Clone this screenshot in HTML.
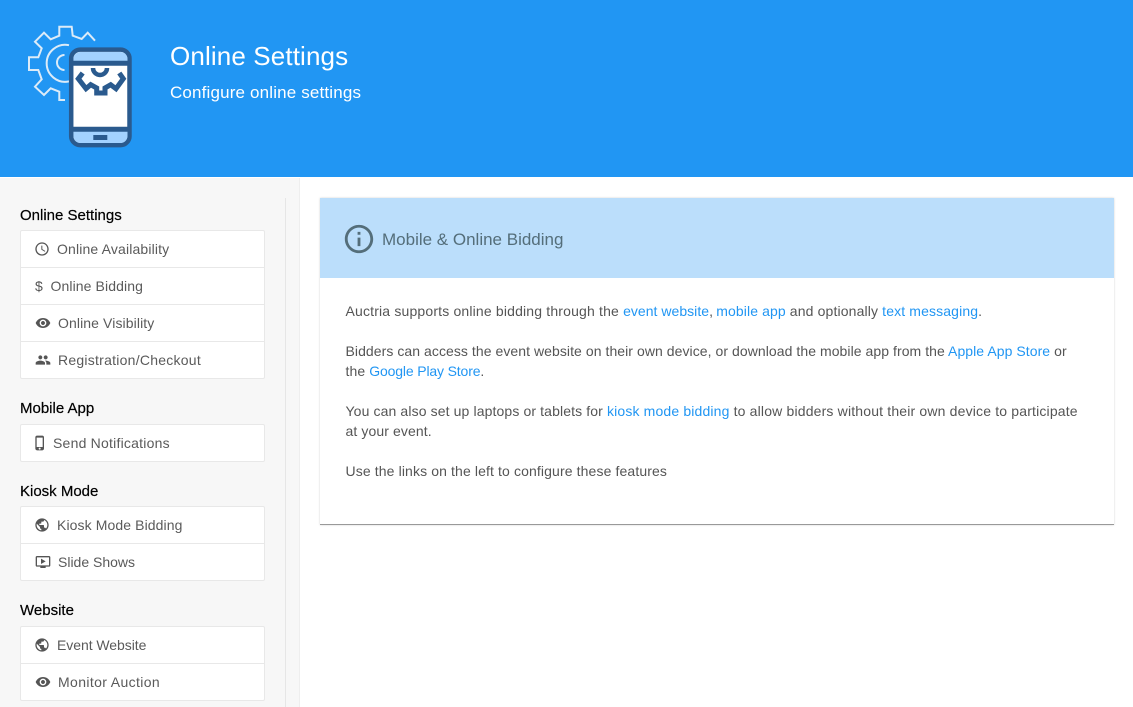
<!DOCTYPE html>
<html lang="en"><head><meta charset="utf-8"><title>Online Settings</title>
<style>
*{box-sizing:border-box}
html,body{margin:0;padding:0;width:1133px;height:707px;overflow:hidden;background:#fff;font-family:"Liberation Sans",sans-serif}
a{color:#2196f3;text-decoration:none}
.hdr{position:absolute;left:0;top:0;width:1133px;height:177px;background:#2196f3;color:#fff}
.t1{position:absolute;left:170px;top:40px;font-size:26px;line-height:32px;letter-spacing:.13px;white-space:nowrap}
.t2{position:absolute;left:170px;top:81px;font-size:17px;line-height:22px;letter-spacing:.16px;white-space:nowrap}
.side{position:absolute;left:0;top:178px;width:300px;height:529px;background:#f7f7f7;border-right:1px solid #eee}
.vl{position:absolute;left:285px;top:198px;width:1px;height:509px;background:#e6e6e6}
.sh{position:absolute;left:20px;font-size:15px;line-height:20px;color:#000;-webkit-text-stroke:.2px #000;white-space:nowrap}
.card{position:absolute;left:20px;width:245px;background:#fff;border:1px solid #e8e8e8;border-radius:2px}
.row{position:relative;height:37px;border-bottom:1px solid #e8e8e8;font-size:14px;line-height:36px;color:#5a5a5a;white-space:nowrap;letter-spacing:.1px}
.row:last-child{border-bottom:0;height:36px}
.row svg{position:absolute;fill:#555}
.row span{position:absolute;top:0}
.panel{position:absolute;left:320px;top:198px;width:794px;height:327px;background:#fff;border-bottom:1px solid #999;box-shadow:0 0 2px rgba(0,0,0,.18)}
.ph{position:absolute;left:0;top:0;width:794px;height:80px;background:#bbdefb}
.ph svg{position:absolute;left:22px;top:24px;fill:#546e7a}
.ph div{position:absolute;left:62px;top:30px;font-size:17px;line-height:24px;color:#546e7a;white-space:nowrap}
.l{position:absolute;left:345.5px;font-size:14px;line-height:20px;color:#555;white-space:nowrap;letter-spacing:.1px}
</style></head><body>
<div class="hdr">
<svg width="140" height="160" viewBox="0 0 140 160" style="position:absolute;left:0;top:0">
<g fill="none" stroke="#dcebf8" stroke-width="2">
<path d="M95 40.7 87.7 32.7 81.7 39 72.7 35.7 71.7 26.7H59.3V35.7L50.7 39.3 44 32.7 35 41.7 41.7 48.3 38.3 57.3H29V70H38.3L41.7 79.3 35 86.7 44 95 50.7 88.3 59.3 91.7V100H65"/>
<path d="M69 45.2A18.5 18.5 0 1 0 69 81.4"/>
<path d="M64.5 55A7.5 7.5 0 0 0 64.5 70"/>
</g>
<rect x="71.2" y="49.6" width="58.3" height="95.5" rx="9" fill="#fff" stroke="#2a5a8e" stroke-width="4.5"/>
<path d="M73.5 61V59a7 7 0 0 1 7-7h40a7 7 0 0 1 7 7v2zM73.5 131v5a7 7 0 0 0 7 7h40a7 7 0 0 0 7-7v-5z" fill="#a3d2ff"/>
<path d="M71 63.2H130M71 129.2H130" stroke="#2a5a8e" stroke-width="5" fill="none"/>
<rect x="93.3" y="135" width="14" height="5" fill="#2a5a8e"/>
<g fill="none" stroke="#2a5a8e" stroke-width="5">
<path d="M93 68a7 7 0 0 0 14 0" stroke-width="4.5"/>
<path d="M82.7 73 78.3 78.7 86 88.7 90.7 84.7 96.7 88V93H105V88L110.7 84.7 116 88.7 123.3 78.7 119.3 73"/>
</g>
</svg>
<div class="t1">Online Settings</div>
<div class="t2" style="top:82px">Configure online settings</div>
</div>

<div class="side"></div><div class="vl"></div>

<div class="sh" style="top:206px">Online Settings</div>
<div class="card" style="top:230px;height:149px">
<div class="row"><svg style="left:13px;top:10px" width="16" height="16" viewBox="0 0 24 24"><path d="M11.99 2C6.47 2 2 6.48 2 12s4.47 10 9.99 10C17.52 22 22 17.52 22 12S17.52 2 11.99 2zM12 20c-4.42 0-8-3.58-8-8s3.58-8 8-8 8 3.58 8 8-3.58 8-8 8zm.5-13H11v6l5.25 3.15.75-1.23-4.5-2.67z"/></svg><span style="left:36px;letter-spacing:.15px">Online Availability</span></div>
<div class="row"><span style="left:14px;color:#555">$</span><span style="left:29.5px">Online Bidding</span></div>
<div class="row"><svg style="left:14px;top:10px" width="16" height="16" viewBox="0 0 24 24"><path d="M12 4.5C7 4.5 2.73 7.61 1 12c1.73 4.39 6 7.5 11 7.5s9.27-3.11 11-7.5c-1.73-4.39-6-7.5-11-7.5zM12 17c-2.76 0-5-2.24-5-5s2.24-5 5-5 5 2.24 5 5-2.24 5-5 5zm0-8c-1.66 0-3 1.34-3 3s1.34 3 3 3 3-1.34 3-3-1.34-3-3-3z"/></svg><span style="left:37px">Online Visibility</span></div>
<div class="row"><svg style="left:14px;top:10px" width="16" height="16" viewBox="0 0 24 24"><path d="M16 11c1.66 0 2.99-1.34 2.99-3S17.66 5 16 5c-1.66 0-3 1.34-3 3s1.34 3 3 3zm-8 0c1.66 0 2.99-1.34 2.99-3S9.66 5 8 5C6.34 5 5 6.34 5 8s1.34 3 3 3zm0 2c-2.33 0-7 1.17-7 3.5V19h14v-2.5c0-2.33-4.67-3.5-7-3.5zm8 0c-.29 0-.62.02-.97.05 1.16.84 1.97 1.97 1.97 3.45V19h6v-2.5c0-2.33-4.67-3.5-7-3.5z"/></svg><span style="left:37px;letter-spacing:.25px">Registration/Checkout</span></div>
</div>

<div class="sh" style="top:399px">Mobile App</div>
<div class="card" style="top:424px;height:38px">
<div class="row"><svg style="left:11px;top:10px" width="16" height="16" viewBox="0 0 24 24"><path d="M15.5 1h-8C6.12 1 5 2.12 5 3.5v17C5 21.88 6.12 23 7.5 23h8c1.38 0 2.5-1.12 2.5-2.5v-17C18 2.12 16.88 1 15.5 1zm-4 21c-.83 0-1.5-.67-1.5-1.5s.67-1.5 1.5-1.5 1.5.67 1.5 1.5-.67 1.5-1.5 1.5zm4.5-4H7V4h9v14z"/></svg><span style="left:32px;letter-spacing:.22px">Send Notifications</span></div>
</div>

<div class="sh" style="top:482px">Kiosk Mode</div>
<div class="card" style="top:506px;height:75px">
<div class="row"><svg style="left:13px;top:10px" width="16" height="16" viewBox="0 0 24 24"><path d="M12 2C6.48 2 2 6.48 2 12s4.48 10 10 10 10-4.48 10-10S17.52 2 12 2zm-1 17.93c-3.95-.49-7-3.85-7-7.93 0-.62.08-1.21.21-1.79L9 15v1c0 1.1.9 2 2 2v1.93zm6.9-2.54c-.26-.81-1-1.39-1.9-1.39h-1v-3c0-.55-.45-1-1-1H8v-2h2c.55 0 1-.45 1-1V7h2c1.1 0 2-.9 2-2v-.41c2.93 1.19 5 4.06 5 7.41 0 2.08-.8 3.97-2.1 5.39z"/></svg><span style="left:36px">Kiosk Mode Bidding</span></div>
<div class="row"><svg style="left:14px;top:10px" width="16" height="16" viewBox="0 0 24 24"><path d="M21 3H3c-1.11 0-2 .89-2 2v12c0 1.1.89 2 2 2h5v2h8v-2h5c1.1 0 1.99-.9 1.99-2L23 5c0-1.11-.9-2-2-2zm0 14H3V5h18v12zm-5-6l-7 4V7z"/></svg><span style="left:37px;letter-spacing:0">Slide Shows</span></div>
</div>

<div class="sh" style="top:601px">Website</div>
<div class="card" style="top:626px;height:75px">
<div class="row"><svg style="left:13px;top:10px" width="16" height="16" viewBox="0 0 24 24"><path d="M12 2C6.48 2 2 6.48 2 12s4.48 10 10 10 10-4.48 10-10S17.52 2 12 2zm-1 17.93c-3.95-.49-7-3.85-7-7.93 0-.62.08-1.21.21-1.79L9 15v1c0 1.1.9 2 2 2v1.93zm6.9-2.54c-.26-.81-1-1.39-1.9-1.39h-1v-3c0-.55-.45-1-1-1H8v-2h2c.55 0 1-.45 1-1V7h2c1.1 0 2-.9 2-2v-.41c2.93 1.19 5 4.06 5 7.41 0 2.08-.8 3.97-2.1 5.39z"/></svg><span style="left:36px;letter-spacing:-.05px">Event Website</span></div>
<div class="row"><svg style="left:14px;top:10px" width="16" height="16" viewBox="0 0 24 24"><path d="M12 4.5C7 4.5 2.73 7.61 1 12c1.73 4.39 6 7.5 11 7.5s9.27-3.11 11-7.5c-1.73-4.39-6-7.5-11-7.5zM12 17c-2.76 0-5-2.24-5-5s2.24-5 5-5 5 2.24 5 5-2.24 5-5 5zm0-8c-1.66 0-3 1.34-3 3s1.34 3 3 3 3-1.34 3-3-1.34-3-3-3z"/></svg><span style="left:37px;letter-spacing:.37px">Monitor Auction</span></div>
</div>

<div class="panel"><div class="ph"><svg width="34" height="34" viewBox="0 0 24 24"><path d="M11 17h2v-6h-2v6zm1-15C6.48 2 2 6.48 2 12s4.48 10 10 10 10-4.48 10-10S17.52 2 12 2zm0 18c-4.41 0-8-3.59-8-8s3.59-8 8-8 8 3.59 8 8-3.59 8-8 8zm-1-11h2V7h-2v2z"/></svg><div>Mobile &amp; Online Bidding</div></div></div>

<div class="l" style="top:301px"><span style="letter-spacing:.17px">Auctria supports online bidding through the </span><a style="letter-spacing:.03px">event website</a><span style="letter-spacing:-.3px">, </span><a>mobile app</a><span style="letter-spacing:.14px"> and optionally </span><a style="letter-spacing:.13px">text messaging</a>.</div>
<div class="l" style="top:341px"><span style="letter-spacing:.06px">Bidders can access the event website on their own device, or download the mobile app from the </span><a style="letter-spacing:.06px">Apple App Store</a> or</div>
<div class="l" style="top:361px">the <a style="letter-spacing:-.15px">Google Play Store</a>.</div>
<div class="l" style="top:401px"><span style="letter-spacing:.12px">You can also set up laptops or tablets for </span><a style="letter-spacing:.15px">kiosk mode bidding</a><span style="letter-spacing:.17px"> to allow bidders without their own device to participate</span></div>
<div class="l" style="top:421px">at your event.</div>
<div class="l" style="top:461px;letter-spacing:.12px">Use the links on the left to configure these features</div>
</body></html>
